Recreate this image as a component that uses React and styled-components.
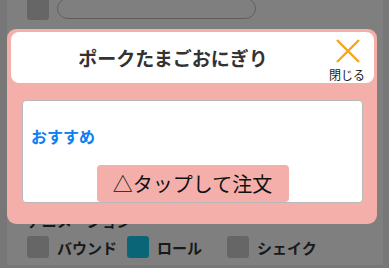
import React from "react";
import styled, { createGlobalStyle } from "styled-components";

const Global = createGlobalStyle`
  html, body { margin: 0; padding: 0; }
  body {
    background: #efefef;
    font-family: "Noto Sans CJK JP", "Noto Sans", sans-serif;
    overflow: hidden;
  }
`;

const Card = styled.div`
  margin: -3px 6px 0 7px;
  background: #ffffff;
  padding: 0 20px 7px 20px;
  box-sizing: border-box;
`;

const TopRow = styled.div`
  display: flex;
  align-items: center;
  gap: 8px;
  height: 23px;
`;

const Box = styled.div`
  width: 22px;
  height: 22px;
  border-radius: 3px;
  background: ${(p) => (p.$on ? "#14ccee" : "#cccccc")};
  flex: none;
`;

const Pill = styled.div`
  width: 199px;
  height: 21px;
  box-sizing: border-box;
  border: 1px solid #bdbdbd;
  border-radius: 11px;
  background: #fff;
`;

const Hidden = styled.div`
  height: 190px;
`;

const Label = styled.div`
  font-size: 15px;
  font-weight: 700;
  color: #333;
  line-height: 22px;
  height: 22px;
`;

const OptionRow = styled.div`
  display: grid;
  grid-template-columns: repeat(3, 100px);
  margin-top: 4px;
`;

const Option = styled.div`
  display: flex;
  align-items: center;
  gap: 8px;
  font-size: 15px;
  font-weight: 700;
  color: #333;
`;

const Backdrop = styled.div`
  position: fixed;
  inset: 0;
  background: rgba(0, 0, 0, 0.5);
`;

const Modal = styled.div`
  position: fixed;
  left: 7px;
  top: 29px;
  width: 370px;
  height: 195px;
  box-sizing: border-box;
  background: #f4afaa;
  border-radius: 9px;
  padding: 3px 3px 0 4px;
  display: flex;
  flex-direction: column;
`;

const Header = styled.div`
  height: 51px;
  background: #fff;
  border-radius: 8px;
  display: flex;
  align-items: center;
  padding: 0 7px 0 8px;
`;

const Title = styled.h2`
  flex: 1;
  margin: 0;
  text-align: center;
  font-size: 19px;
  font-weight: 700;
  color: #333;
  line-height: 26px;
`;

const Close = styled.div`
  width: 40px;
  display: flex;
  flex-direction: column;
  align-items: center;
  padding-top: 6px;
  color: #222;
  font-size: 12px;
  line-height: 14px;
  svg { display: block; margin-bottom: 5px; margin-left: 1px; }
`;

const Body = styled.div`
  margin: 17px 11px 0 11px;
  height: 103px;
  box-sizing: border-box;
  background: #fff;
  border: 1px solid #b9b9b9;
  border-radius: 4px;
  display: flex;
  flex-direction: column;
  padding: 0 8px;
`;

const Recommend = styled.div`
  margin-top: 25px;
  font-size: 16px;
  font-weight: 700;
  line-height: 21px;
  color: #0d80f2;
`;

const OrderButton = styled.button`
  margin-top: auto;
  align-self: center;
  width: 192px;
  height: 37px;
  border: none;
  border-radius: 4px;
  background: #f4afaa;
  color: #111;
  font-family: "Noto Sans CJK JP", "Noto Sans", sans-serif;
  font-size: 20px;
  font-weight: 400;
  padding: 0;
  line-height: 37px;
`;

export default function App() {
  return (
    <>
      <Global />
      <Card>
        <TopRow>
          <Box />
          <Pill />
        </TopRow>
        <Hidden />
        <Label>アニメーション</Label>
        <OptionRow>
          <Option><Box />バウンド</Option>
          <Option><Box $on />ロール</Option>
          <Option><Box />シェイク</Option>
        </OptionRow>
      </Card>
      <Backdrop />
      <Modal>
        <Header>
          <Title>ポークたまごおにぎり</Title>
          <Close>
            <svg width="24" height="24" viewBox="0 0 24 24">
              <path d="M1 1 L23 23 M23 1 L1 23" stroke="#f7a51c" strokeWidth="2.4" />
            </svg>
            閉じる
          </Close>
        </Header>
        <Body>
          <Recommend>おすすめ</Recommend>
          <OrderButton>△タップして注文</OrderButton>
        </Body>
      </Modal>
    </>
  );
}
